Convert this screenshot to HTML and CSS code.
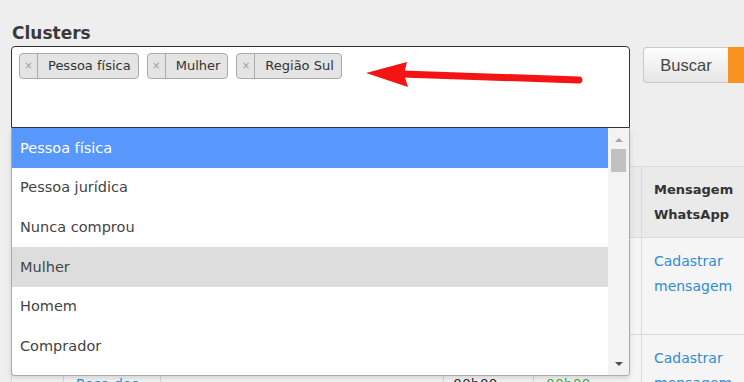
FILE: index.html
```html
<!DOCTYPE html>
<html lang="pt-BR">
<head>
<meta charset="utf-8">
<title>Clusters</title>
<link rel="stylesheet" href="styles.css">
</head>
<body>
<div class="page">
  <h2 class="title">Clusters</h2>
  <div class="search-row">
    <div class="field">
      <ul class="chips">
        <li class="chip"><span class="chip-x">×</span><span class="chip-label">Pessoa física</span></li>
        <li class="chip"><span class="chip-x">×</span><span class="chip-label">Mulher</span></li>
        <li class="chip"><span class="chip-x">×</span><span class="chip-label">Região Sul</span></li>
      </ul>
      <div class="dropdown">
        <ul class="options">
          <li class="opt is-hl">Pessoa física</li>
          <li class="opt">Pessoa jurídica</li>
          <li class="opt">Nunca comprou</li>
          <li class="opt is-sel">Mulher</li>
          <li class="opt">Homem</li>
          <li class="opt">Comprador</li>
        </ul>
        <div class="scrollbar">
          <span class="sb-up"></span>
          <span class="sb-thumb"></span>
          <span class="sb-down"></span>
        </div>
      </div>
    </div>
    <button class="btn" type="button">Buscar</button>
    <button class="btn-orange" type="button"></button>
  </div>
  <table class="grid">
    <colgroup>
      <col class="c1"><col class="c2"><col class="c3"><col class="c4"><col class="c5"><col class="c6">
    </colgroup>
    <thead>
      <tr>
        <th></th><th></th><th></th><th></th><th></th><th>Mensagem WhatsApp</th>
      </tr>
    </thead>
    <tbody>
      <tr class="r1">
        <td></td><td></td><td></td><td></td><td></td><td><a class="link">Cadastrar mensagem</a></td>
      </tr>
      <tr class="r2">
        <td></td>
        <td class="low wrap"><a class="link">Rosa dos ventos</a></td>
        <td></td>
        <td class="low tight">00h00</td>
        <td class="low ok">00h00</td>
        <td><a class="link">Cadastrar mensagem</a></td>
      </tr>
    </tbody>
  </table>
</div>
<svg class="arrow" width="230" height="40" viewBox="0 0 230 40" aria-hidden="true">
  <line x1="42" y1="18" x2="219" y2="24" stroke="#f41414" stroke-width="7" stroke-linecap="round"/>
  <polygon points="6,17 47,6 44,18 48,31" fill="#f41414"/>
</svg>
</body>
</html>
```

FILE: styles.css
```css
* { box-sizing: border-box; }
html, body { margin: 0; padding: 0; }
body {
  width: 744px;
  height: 382px;
  overflow: hidden;
  position: relative;
  background: #eeeeee;
  font-family: "DejaVu Sans", Verdana, sans-serif;
  color: #333;
}
.page { padding: 23px 0 0 11px; }
.title {
  margin: 0 0 3px 1px;
  font-size: 17px;
  line-height: 20px;
  font-weight: bold;
  color: #3a3a3a;
}
.search-row { display: flex; align-items: flex-start; }
.search-row > * { flex: none; }
.field {
  position: relative;
  width: 619px;
  height: 82px;
  background: #fff;
  border: 1px solid #333;
  border-radius: 4px 4px 0 0;
  padding: 6px 7px;
}
.chips { list-style: none; margin: 0; padding: 0; display: flex; gap: 8px; }
.chip {
  display: flex;
  height: 26px;
  border: 1px solid #aaa;
  border-radius: 4px;
  background: #e4e4e4;
  font-size: 13px;
  line-height: 24px;
  color: #333;
}
.chip-x {
  width: 18px;
  border-right: 1px solid #aaa;
  text-align: center;
  color: #a0a0a0;
  font-size: 10px;
}
.chip-label { padding: 0 7px 0 10px; }

.dropdown {
  position: absolute;
  left: -1px;
  right: -1px;
  top: calc(100% + 1px);
  height: 248px;
  background: #fff;
  border: 1px solid #aaa;
  border-top: none;
  border-radius: 0 0 4px 4px;
  box-shadow: 0 3px 5px rgba(0,0,0,0.12);
  display: flex;
  overflow: hidden;
  z-index: 2;
}
.options { flex: 1; list-style: none; margin: 0; padding: 0; overflow: hidden; }
.opt {
  height: 39.67px;
  display: flex;
  align-items: center;
  padding-left: 8px;
  font-size: 14.5px;
  color: #444;
}
.opt.is-hl { background: #5897fb; color: #fff; }
.opt.is-sel { background: #dddddd; }
.scrollbar {
  width: 21px;
  background: #f3f3f3;
  display: flex;
  flex-direction: column;
  align-items: center;
  padding: 10px 0 9px;
}
.sb-up {
  width: 0; height: 0;
  border-left: 4px solid transparent;
  border-right: 4px solid transparent;
  border-bottom: 4px solid #a8a8a8;
}
.sb-thumb { width: 15px; height: 23px; margin-top: 7px; background: #c1c1c1; }
.sb-down {
  margin-top: auto;
  width: 0; height: 0;
  border-left: 4px solid transparent;
  border-right: 4px solid transparent;
  border-top: 4px solid #505050;
}

.btn {
  margin: 1px 0 0 13px;
  width: 85px;
  height: 36px;
  padding: 0;
  border: 1px solid #c9c9c9;
  border-right: none;
  border-radius: 4px 0 0 4px;
  background: linear-gradient(#fdfdfd, #e6e6e6);
  font-family: "Liberation Sans", Arial, sans-serif;
  font-size: 16.5px;
  color: #444;
}
.btn-orange {
  margin-top: 1px;
  width: 40px;
  height: 36px;
  border: none;
  background: #f7931e;
}

.grid {
  margin-top: 38px;
  border-collapse: collapse;
  table-layout: fixed;
  width: 750px;
  font-size: 14px;
  line-height: 25px;
}
.c1 { width: 52px; }
.c2 { width: 97px; }
.c3 { width: 283px; }
.c4 { width: 90px; }
.c5 { width: 108px; }
.c6 { width: 120px; }
.grid th, .grid td {
  border: 1px solid #dadada;
  padding: 11px 12px;
  vertical-align: top;
  text-align: left;
}
.grid th {
  height: 70px;
  padding: 10px 12px;
  background: #eaeaea;
  font-size: 13px;
  font-weight: bold;
  color: #333;
}
.grid td { background: #f5f5f5; color: #333; }
.grid td.low { padding-top: 37px; white-space: nowrap; }
.grid td.wrap { white-space: normal; padding-right: 6px; }
.grid td.tight { padding-left: 9px; }
.r1 td { height: 97px; }
.r2 td { height: 120px; }
.grid td.ok { color: #4cae4c; }
.link { color: #2f8cd3; }

.arrow { position: absolute; left: 360px; top: 56px; }
```
